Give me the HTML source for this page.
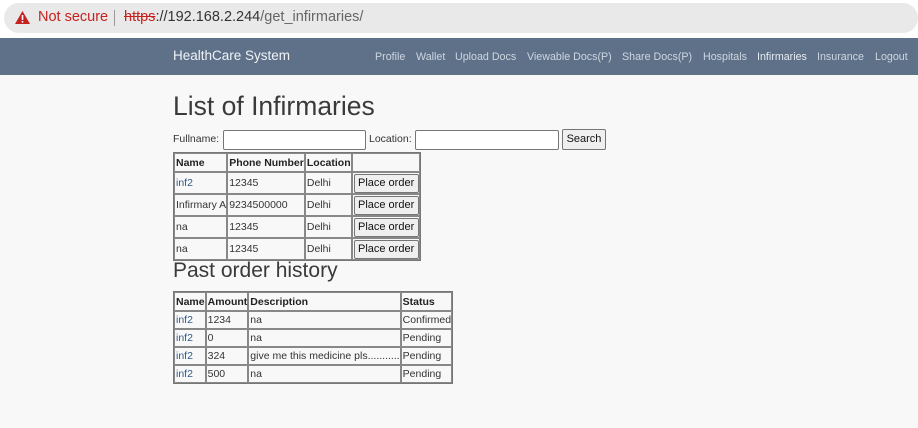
<!DOCTYPE html>
<html><head><meta charset="utf-8"><style>
*{margin:0;padding:0;box-sizing:border-box}
body{width:918px;height:428px;background:#f8f8f8;font-family:"Liberation Sans",Arial,sans-serif;position:relative;overflow:hidden;color:#333}
.bar{position:absolute;left:0;top:0;width:918px;height:38px;background:#fff}
.pill{position:absolute;left:4px;top:3px;width:914px;height:30px;background:#e9e9e9;border-radius:15px}
.ns{position:absolute;top:9px;font-size:14.5px;font-family:"Liberation Sans",sans-serif;white-space:nowrap}
.nav{position:absolute;left:0;top:38px;width:918px;height:37px;background:#5f7189}
.brand{position:absolute;left:173px;top:48px;color:#eef2f6;font-size:13.5px}
.links{position:absolute;top:51px;font-size:10.7px;color:#cdd6e0}
.links span{position:absolute;white-space:nowrap}
h1{position:absolute;left:173px;top:91px;font-size:26.5px;font-weight:normal;color:#3a3a3a}
h2{position:absolute;left:173px;top:259px;font-size:21px;font-weight:normal;color:#3a3a3a}
.lbl{position:absolute;font-size:10.5px;color:#333}
.inp{position:absolute;height:20px;background:#fff;border:1px solid #767676;border-radius:2px}
.btn{position:absolute;background:#efefef;border:1px solid #767676;border-radius:2px;font-size:11px;color:#111;text-align:center}
table{position:absolute;border-collapse:separate;border-spacing:0;border:1px solid #777;font-size:10.5px}
td,th{border:1px solid #888;text-align:left;padding:0 0 0 1px;white-space:nowrap;color:#333}
th{font-weight:bold;color:#222}
.b{color:#2d5a8a}
</style></head><body>
<div class="bar"><div class="pill"></div>
<svg style="position:absolute;left:14px;top:10px" width="17" height="15" viewBox="0 0 17 15"><path d="M8.5 1L16 14H1Z" fill="#c5221f"/><rect x="7.7" y="5" width="1.6" height="5" fill="#fff"/><rect x="7.7" y="11" width="1.6" height="1.6" fill="#fff"/></svg>
<span class="ns" style="left:38px;color:#c5221f">Not secure</span>
<span style="position:absolute;left:114px;top:10px;width:1px;height:16px;background:#999"></span>
<span class="ns" style="left:124px;color:#333"><span style="color:#c5221f;text-decoration:line-through">https</span>://192.168.2.244<span style="color:#666">/get_infirmaries/</span></span>
</div>
<div class="nav"></div>
<div class="brand">HealthCare System</div>
<div class="links">
<span style="left:375px">Profile</span><span style="left:416px">Wallet</span><span style="left:455px">Upload Docs</span><span style="left:527px">Viewable Docs(P)</span><span style="left:622px">Share Docs(P)</span><span style="left:703px">Hospitals</span><span style="left:757px;color:#e6ecf2">Infirmaries</span><span style="left:817px">Insurance</span><span style="left:875px">Logout</span>
</div>
<h1>List of Infirmaries</h1>
<span class="lbl" style="left:173px;top:133px">Fullname:</span>
<div class="inp" style="left:223px;top:130px;width:143px"></div>
<span class="lbl" style="left:369px;top:133px">Location:</span>
<div class="inp" style="left:415px;top:130px;width:144px"></div>
<div class="btn" style="left:562px;top:129px;width:44px;height:21px;line-height:19px">Search</div>
<table style="left:173px;top:152px">
<tr style="height:19px"><th>Name</th><th>Phone Number</th><th>Location</th><td style="width:68px"></td></tr>
<tr style="height:22px"><td class="b">inf2</td><td>12345</td><td>Delhi</td><td><div class="btn" style="position:static;height:19px;line-height:17px">Place order</div></td></tr>
<tr style="height:22px"><td>Infirmary A</td><td>9234500000</td><td>Delhi</td><td><div class="btn" style="position:static;height:19px;line-height:17px">Place order</div></td></tr>
<tr style="height:22px"><td>na</td><td>12345</td><td>Delhi</td><td><div class="btn" style="position:static;height:19px;line-height:17px">Place order</div></td></tr>
<tr style="height:22px"><td>na</td><td>12345</td><td>Delhi</td><td><div class="btn" style="position:static;height:19px;line-height:17px">Place order</div></td></tr>
</table>
<h2>Past order history</h2>
<table style="left:173px;top:291px">
<tr style="height:19px"><th>Name</th><th>Amount</th><th>Description</th><th>Status</th></tr>
<tr style="height:18px"><td class="b">inf2</td><td>1234</td><td>na</td><td>Confirmed</td></tr>
<tr style="height:18px"><td class="b">inf2</td><td>0</td><td>na</td><td>Pending</td></tr>
<tr style="height:18px"><td class="b">inf2</td><td>324</td><td>give me this medicine pls...........</td><td>Pending</td></tr>
<tr style="height:18px"><td class="b">inf2</td><td>500</td><td>na</td><td>Pending</td></tr>
</table>
</body></html>
